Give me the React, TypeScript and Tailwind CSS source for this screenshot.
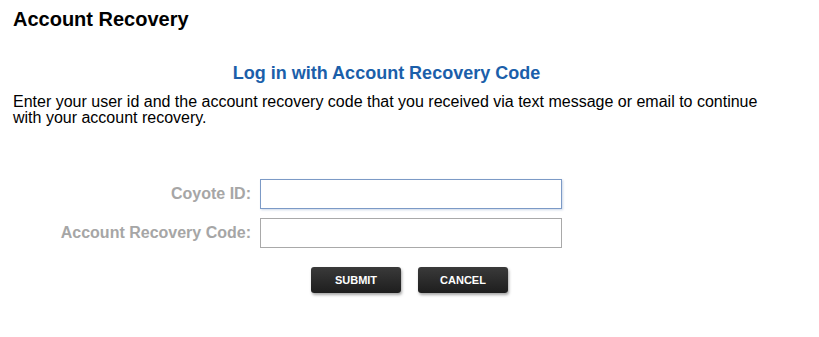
import React from 'react';

const App = () => {
  return (
    <div className="min-h-[337px] bg-white px-[13px] pt-[8px] font-['Liberation_Sans',Arial,sans-serif] text-black">
      <h1 className="text-[20px] font-bold leading-[22px]">Account Recovery</h1>

      <h2 className="mt-[33px] w-[747px] text-center text-[18px] font-bold leading-[20px] text-[#1b5faa]">
        Log in with Account Recovery Code
      </h2>

      <p className="mt-[11px] w-[770px] text-[16px] leading-[16px]">
        Enter your user id and the account recovery code that you received via text message or email to continue
        with your account recovery.
      </p>

      <form className="mt-[53px] flex flex-col gap-[9px]">
        <div className="flex items-center">
          <label className="w-[247px] pr-[9px] text-right text-[16px] font-bold text-[#a6a6a6]">Coyote ID:</label>
          <input
            type="text"
            autoFocus
            className="h-[30px] w-[302px] border border-[#7c9ac6] px-[3px] text-[15px] caret-black shadow-[1px_1px_2px_rgba(124,154,198,0.4)] outline-none"
          />
        </div>
        <div className="flex items-center">
          <label className="w-[247px] pr-[9px] text-right text-[16px] font-bold text-[#a6a6a6]">
            Account Recovery Code:
          </label>
          <input
            type="text"
            className="h-[30px] w-[302px] border border-[#a9a9a9] px-[3px] text-[15px] outline-none"
          />
        </div>

        <div className="mt-[10px] flex gap-[17px] pl-[298px]">
          <button
            type="button"
            className="h-[26px] w-[90px] rounded-[3px] bg-gradient-to-b from-[#3a3a3a] to-[#1e1e1e] text-[11px] font-bold text-white shadow-[1px_2px_3px_rgba(0,0,0,0.35)]"
          >
            SUBMIT
          </button>
          <button
            type="button"
            className="h-[26px] w-[90px] rounded-[3px] bg-gradient-to-b from-[#3a3a3a] to-[#1e1e1e] text-[11px] font-bold text-white shadow-[1px_2px_3px_rgba(0,0,0,0.35)]"
          >
            CANCEL
          </button>
        </div>
      </form>
    </div>
  );
};

export default App;
